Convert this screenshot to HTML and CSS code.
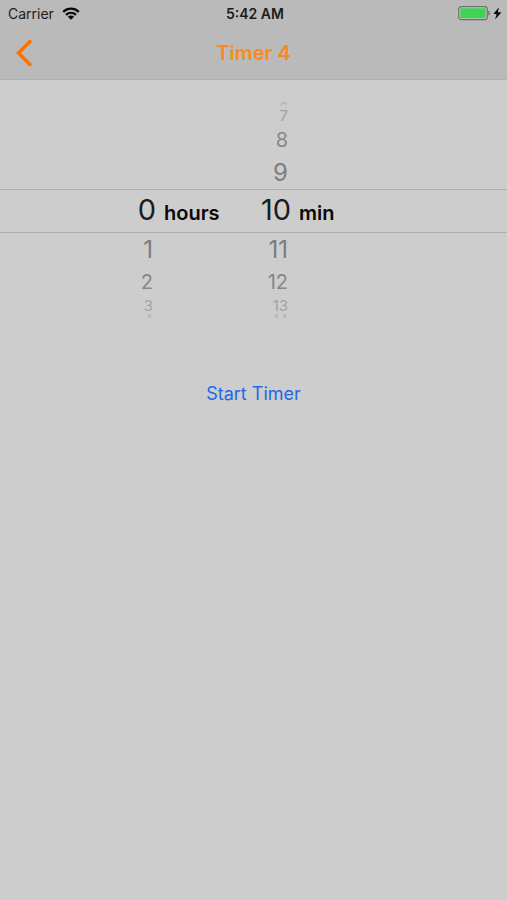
FILE: index.html
```html
<!DOCTYPE html>
<html lang="en">
<head>
<meta charset="utf-8">
<meta name="viewport" content="width=device-width, initial-scale=1">
<title>Timer 4</title>
<link rel="stylesheet" href="styles.css">
</head>
<body>
<header class="top">
  <div class="status">
    <div class="status-left">
      <span>Carrier</span>
      <svg class="wifi" viewBox="0 0 18 13" aria-hidden="true">
        <path d="M1.200 4.800C5.600.6 12.400.6 16.800 4.800M4 7.800c2.900-2.700 7.100-2.700 10 0" fill="none" stroke="#080808" stroke-width="2.300"/>
        <path d="M5.900 9.700c1.800-1.600 4.400-1.600 6.200 0L9 12.800z" fill="#080808"/>
      </svg>
    </div>
    <span class="clock">5:42 AM</span>
    <div class="status-right">
      <svg class="battery" viewBox="0 0 44 15" aria-hidden="true">
        <rect x=".7" y=".7" width="28.600" height="13" rx="2.800" fill="#c6c6c6" stroke="#6f6f6f" stroke-width="1.200"/>
        <rect x="2.300" y="2.300" width="25.400" height="9.900" rx="1" fill="#40d251"/>
        <path d="M30.300 4.800c2.200.6 2.200 4.300 0 4.900z" fill="#6f6f6f"/>
        <path d="M41 1.300 35.300 8h3.300l-1.500 5.600L43.500 6.200h-3.700z" fill="#080808"/>
      </svg>
    </div>
  </div>
  <nav class="nav">
    <button class="back" type="button" aria-label="Back">
      <svg class="chevron" viewBox="0 0 18 28" aria-hidden="true">
        <path d="M15 2.500 3.500 14 15 25.500" fill="none" stroke="#ff7200" stroke-width="3.500" stroke-linecap="round" stroke-linejoin="miter"/>
      </svg>
    </button>
    <h1 class="title">Timer 4</h1>
  </nav>
</header>
<main class="content">
  <div class="picker">
    <div class="row edge edge-top"><span></span><span></span><span>6</span></div>
    <div class="row far"><span></span><span></span><span>7</span></div>
    <div class="row mid"><span></span><span></span><span>8</span></div>
    <div class="row near"><span></span><span></span><span>9</span></div>
    <div class="row selected"><span>0</span><span class="unit">hours</span><span>10</span><span class="unit">min</span></div>
    <div class="row near"><span>1</span><span></span><span>11</span></div>
    <div class="row mid"><span>2</span><span></span><span>12</span></div>
    <div class="row far"><span>3</span><span></span><span>13</span></div>
    <div class="row edge"><span>4</span><span></span><span>14</span></div>
  </div>
  <button class="start" type="button">Start Timer</button>
</main>
</body>
</html>
```
FILE: styles.css
```css
* {
  box-sizing: border-box;
}

body {
  margin: 0;
  min-height: 100vh;
  background: #cdcdcd;
  color: #1c1c1c;
  font-family: Inter, "Liberation Sans", sans-serif;
}

button {
  border: 0;
  background: none;
  font: inherit;
}

.top {
  background: #bababa;
  border-bottom: 1px solid #b0b0b0;
}

.status {
  display: grid;
  grid-template-columns: 1fr auto 1fr;
  align-items: center;
  height: 26px;
  padding: 0 5px 0 8px;
  font-size: 14px;
}

.status-left {
  display: flex;
  align-items: center;
  gap: 8px;
}

.wifi {
  width: 18px;
  height: 13px;
}

.clock {
  font-weight: 600;
}

.status-right {
  display: flex;
  justify-content: flex-end;
}

.battery {
  width: 44px;
  height: 15px;
}

.nav {
  display: grid;
  grid-template-columns: 1fr auto 1fr;
  align-items: center;
  height: 53px;
}

.back {
  justify-self: start;
  display: flex;
  padding: 0 15px;
}

.chevron {
  width: 18px;
  height: 28px;
}

.title {
  margin: 0;
  color: #f98a1b;
  font-size: 20px;
  font-weight: 600;
}

.content {
  display: flex;
  flex-direction: column;
  align-items: center;
  padding-top: 22px;
}

.picker {
  width: 100%;
}

.row {
  display: grid;
  grid-template-columns: 156fr 71fr 64fr 216fr;
  align-items: center;
  overflow: hidden;
  text-align: right;
}

.row > span {
  padding-right: 3px;
}

.near {
  height: 33px;
  color: #7d7d7d;
  font-size: 24px;
  line-height: 32px;
}

.mid {
  height: 32px;
  color: #868686;
  font-size: 20px;
  line-height: 32px;
}

.far {
  height: 16px;
  color: #a2a2a2;
  font-size: 15px;
  line-height: 16px;
}

.edge {
  height: 4px;
  color: #b4b4b4;
  font-size: 14px;
  line-height: 12px;
  align-items: start;
}

.edge-top {
  margin-bottom: 2px;
  align-items: end;
}

.selected {
  height: 44px;
  border-top: 1px solid #b0b0b0;
  border-bottom: 1px solid #b0b0b0;
  font-size: 29px;
  align-items: baseline;
  line-height: 40px;
}

.row.selected > span {
  padding-right: 0;
}

.row.selected > .unit {
  padding-left: 8px;
  color: #080808;
  font-size: 20px;
  font-weight: 600;
  text-align: left;
}

.start {
  margin-top: 60px;
  padding: 4px 8px;
  color: #2467e8;
  font-size: 18px;
  line-height: 24px;
}
```
